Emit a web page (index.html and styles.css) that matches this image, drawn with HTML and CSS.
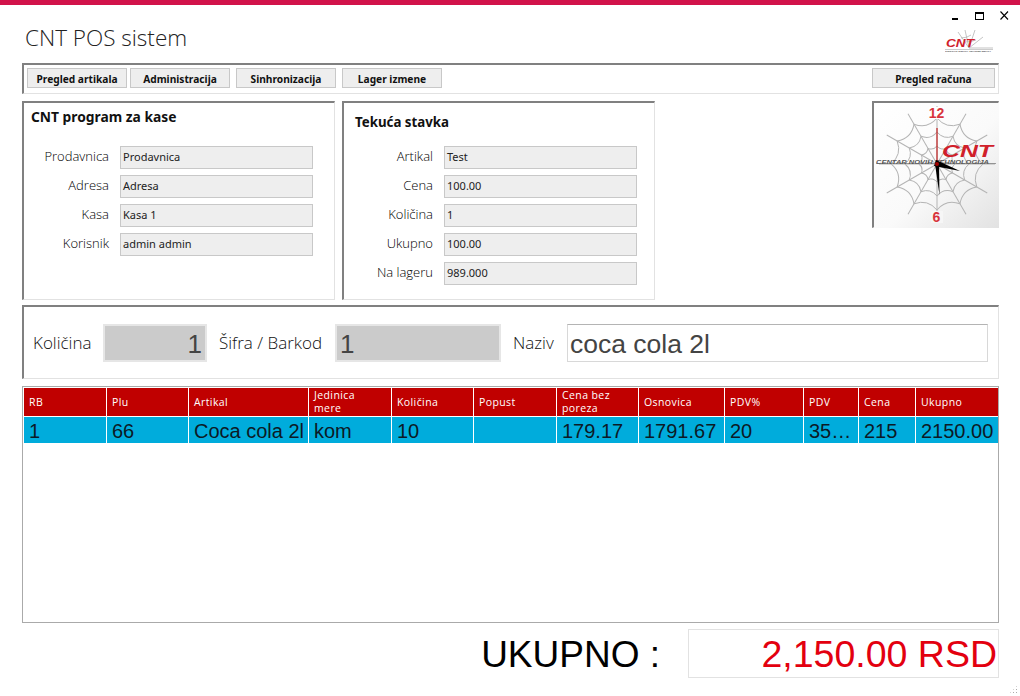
FILE: index.html
```html
<!DOCTYPE html>
<html>
<head>
<meta charset="UTF-8">
<title>CNT POS sistem</title>
<link rel="stylesheet" href="styles.css">
</head>
<body>
<div class="top-line"></div>
<div class="window">

  <div class="header">
    <h1 class="app-title">CNT POS sistem</h1>
    <div class="header-right">
      <svg class="win-controls" width="60" height="12" viewBox="0 0 60 12">
        <rect x="2" y="8" width="6" height="2" fill="#000"/>
        <rect x="25.5" y="2.5" width="8" height="7" fill="none" stroke="#000"/>
        <rect x="25" y="2" width="9" height="2" fill="#000"/>
        <path d="M50.5 1.5 L58 9.5 M58 1.5 L50.5 9.5" stroke="#000" stroke-width="1.1" fill="none"/>
      </svg>
      <svg class="small-logo" width="48" height="22" viewBox="0 0 48 22">
        <g stroke="#aaa" stroke-width="0.7" fill="none">
          <path d="M24 18 L13 2 M24 18 L20 0 M24 18 L30 0 M24 18 L38 7 M24 18 L48 18"/>
          <path d="M16 8 Q22 8 26 5 M20 12 Q26 12 31 10"/>
        </g>
        <text class="logo-cnt" x="1" y="17" font-size="11" textLength="28" lengthAdjust="spacingAndGlyphs">CNT</text>
        <line x1="0" y1="19.5" x2="48" y2="19.5" stroke="#999" stroke-width="0.5"/>
        <text class="logo-sub" x="0" y="21.6" font-size="2.4" textLength="46" lengthAdjust="spacingAndGlyphs">CENTAR NOVIH TEHNOLOGIJA</text>
      </svg>
    </div>
  </div>

  <div class="toolbar box">
    <div class="btn btn-first">Pregled artikala</div>
    <div class="btn">Administracija</div>
    <div class="btn">Sinhronizacija</div>
    <div class="btn">Lager izmene</div>
    <div class="btn btn-right">Pregled računa</div>
  </div>

  <div class="info-row">
    <div class="panel panel-shop box">
      <h2 class="panel-title">CNT program za kase</h2>
      <div class="fields">
        <div class="field-label">Prodavnica</div><div class="field">Prodavnica</div>
        <div class="field-label">Adresa</div><div class="field">Adresa</div>
        <div class="field-label">Kasa</div><div class="field">Kasa 1</div>
        <div class="field-label">Korisnik</div><div class="field">admin admin</div>
      </div>
    </div>

    <div class="panel panel-item box">
      <h2 class="panel-title">Tekuća stavka</h2>
      <div class="fields">
        <div class="field-label">Artikal</div><div class="field">Test</div>
        <div class="field-label">Cena</div><div class="field">100.00</div>
        <div class="field-label">Količina</div><div class="field">1</div>
        <div class="field-label">Ukupno</div><div class="field">100.00</div>
        <div class="field-label">Na lageru</div><div class="field">989.000</div>
      </div>
    </div>

    <div class="clock box">
      <svg width="125" height="125" viewBox="0 0 125 125">
        <defs>
          <linearGradient id="clockBg" x1="0" y1="0" x2="1" y2="1">
            <stop offset="0" stop-color="#ffffff"/>
            <stop offset="0.55" stop-color="#fafafa"/>
            <stop offset="1" stop-color="#e2e2e2"/>
          </linearGradient>
          <g id="webPart" fill="none" stroke="#b4b4b4" stroke-width="1">
            <path d="M0 0 L58 0"/>
            <path d="M46 0 Q34.8 9.3 39.8 23"/>
            <path d="M32 0 Q24.1 6.5 27.7 16"/>
            <path d="M18 0 Q13.5 3.6 15.6 9"/>
          </g>
        </defs>
        <rect width="125" height="125" fill="url(#clockBg)"/>
        <g transform="translate(63 61)">
          <use href="#webPart"/>
          <use href="#webPart" transform="rotate(30)"/>
          <use href="#webPart" transform="rotate(60)"/>
          <use href="#webPart" transform="rotate(90)"/>
          <use href="#webPart" transform="rotate(120)"/>
          <use href="#webPart" transform="rotate(150)"/>
          <use href="#webPart" transform="rotate(180)"/>
          <use href="#webPart" transform="rotate(210)"/>
          <use href="#webPart" transform="rotate(240)"/>
          <use href="#webPart" transform="rotate(270)"/>
          <use href="#webPart" transform="rotate(300)"/>
          <use href="#webPart" transform="rotate(330)"/>
        </g>
        <rect x="55" y="4" width="15" height="12" fill="#fff"/>
        <rect x="57" y="108" width="12" height="12" fill="#f6f6f6"/>
        <text class="clock-num" x="62.5" y="15" font-size="14" text-anchor="middle">12</text>
        <text class="clock-num" x="62.5" y="119" font-size="14" text-anchor="middle">6</text>
        <text class="logo-cnt" x="68" y="54" font-size="16" textLength="51" lengthAdjust="spacingAndGlyphs">CNT</text>
        <line x1="2" y1="60.5" x2="122" y2="60.5" stroke="#777" stroke-width="0.7"/>
        <text class="logo-sub" x="2" y="60.5" font-size="6" textLength="113" lengthAdjust="spacingAndGlyphs">CENTAR NOVIH TEHNOLOGIJA</text>
        <line x1="63" y1="25" x2="63" y2="61" stroke="#c00000" stroke-width="1"/>
        <path d="M62 57 L86 68 L60 63 Z" fill="#000"/>
        <path d="M61 61 L65 61 L65.5 92 Z" fill="#000"/>
        <circle cx="63" cy="61" r="2" fill="#a00000"/>
      </svg>
    </div>
  </div>

  <div class="search box">
    <div class="search-label label-qty">Količina</div>
    <div class="search-input input-qty">1</div>
    <div class="search-label label-code">Šifra / Barkod</div>
    <div class="search-input input-code">1</div>
    <div class="search-label label-name">Naziv</div>
    <div class="input-name">coca cola 2l</div>
  </div>

  <div class="table-wrap">
    <table class="items">
      <thead>
        <tr>
          <th>RB</th>
          <th>Plu</th>
          <th>Artikal</th>
          <th>Jedinica mere</th>
          <th>Količina</th>
          <th>Popust</th>
          <th>Cena bez poreza</th>
          <th>Osnovica</th>
          <th>PDV%</th>
          <th>PDV</th>
          <th>Cena</th>
          <th>Ukupno</th>
        </tr>
      </thead>
      <tbody>
        <tr>
          <td>1</td>
          <td>66</td>
          <td>Coca cola 2l</td>
          <td>kom</td>
          <td>10</td>
          <td></td>
          <td>179.17</td>
          <td>1791.67</td>
          <td>20</td>
          <td>35…</td>
          <td>215</td>
          <td>2150.00</td>
        </tr>
      </tbody>
    </table>
  </div>

  <div class="total-row">
    <div class="total-label">UKUPNO :</div>
    <div class="total-value">2,150.00 RSD</div>
  </div>

</div>
<div class="grip"></div>
</body>
</html>
```

FILE: styles.css
```css
* {
  box-sizing: border-box;
}

body {
  margin: 0;
  background-color: #fff;
  font-family: "Open Sans", sans-serif;
  color: #000;
  height: 696px;
  overflow: hidden;
}

.top-line {
  height: 5px;
  background-color: #d1134a;
}

.window {
  padding: 0 21px 0 22px;
}

/* gray top and left edge, pale right and bottom edge */
.box {
  border-top: 2px solid #808080;
  border-left: 2px solid #808080;
  border-right: 1px solid #e2e2e2;
  border-bottom: 1px solid #e2e2e2;
}

.header {
  height: 58px;
  display: flex;
  justify-content: space-between;
  margin-right: -11px;
}

.app-title {
  margin: 19px 0 0 3px;
  font-size: 22.5px;
  line-height: 28px;
  font-weight: 300;
  color: #222;
}

.header-right {
  display: flex;
  flex-direction: column;
  align-items: flex-end;
  padding-top: 5px;
}

.win-controls {
  display: block;
}

.small-logo {
  display: block;
  margin: 8px 17px 0 0;
}

.logo-cnt {
  font-family: "Liberation Sans", sans-serif;
  font-weight: bold;
  font-style: italic;
  fill: #d0202a;
}

.logo-sub {
  font-family: "Liberation Sans", sans-serif;
  font-weight: bold;
  font-style: italic;
  fill: #555;
}

.clock-num {
  font-family: "Liberation Sans", sans-serif;
  font-weight: bold;
  fill: #d8343c;
}

.toolbar {
  height: 31px;
  display: flex;
  gap: 6px;
  padding: 3px 3px 0 3px;
}

.btn {
  width: 100px;
  height: 20px;
  background-color: #eee;
  border: 1px solid #c8c8c8;
  font-family: "Noto Sans", sans-serif;
  font-size: 10.2px;
  font-weight: bold;
  line-height: 20px;
  text-align: center;
  color: #111;
}

.btn-first {
  margin-right: -3px;
}

.btn-right {
  width: 123px;
  margin-left: auto;
}

.info-row {
  display: flex;
  margin-top: 7px;
  height: 199px;
}

.panel {
  width: 313px;
  margin-right: 7px;
}

.panel-shop {
  padding: 4px 0 0 7px;
}

.panel-item {
  padding: 9px 0 0 11px;
}

.panel-title {
  margin: 0 0 19px 0;
  font-family: "Noto Sans", sans-serif;
  font-size: 13.8px;
  line-height: 20px;
  font-weight: bold;
  color: #111;
}

.panel-item .panel-title {
  margin-bottom: 14px;
  font-size: 13.3px;
}

.fields {
  display: grid;
  grid-template-columns: 78px 193px;
  grid-auto-rows: 23px;
  column-gap: 11px;
  row-gap: 6px;
}

.field-label {
  text-align: right;
  font-size: 13px;
  font-weight: 300;
  line-height: 21px;
  color: #000;
}

.field {
  background-color: #eee;
  border: 1px solid #c8c8c8;
  padding-left: 2px;
  font-family: "Noto Sans", sans-serif;
  font-size: 11px;
  line-height: 19px;
  color: #222;
}

.clock {
  width: 127px;
  height: 127px;
  margin-left: auto;
}

.clock svg {
  display: block;
}

.search {
  height: 74px;
  margin-top: 5px;
  display: flex;
  align-items: flex-start;
  padding-top: 17px;
}

.search-label {
  font-size: 17px;
  font-weight: 300;
  line-height: 38px;
  color: #111;
}

.label-qty {
  width: 70px;
  margin-left: 9px;
}

.label-code {
  width: 116px;
  margin-left: 12px;
}

.label-name {
  width: 54px;
  margin-left: 12px;
}

.search-input {
  height: 38px;
  background-color: #cbcbcb;
  border: 2px solid #e6e6e6;
  padding: 0 3px;
  font-family: "Liberation Sans", sans-serif;
  font-size: 26px;
  line-height: 36px;
  color: #444;
}

.input-qty {
  width: 104px;
  text-align: right;
}

.input-code {
  width: 166px;
}

.input-name {
  width: 421px;
  height: 38px;
  background-color: #fff;
  border: 1px solid #d8d8d8;
  border-top-color: #b4b4b4;
  padding-left: 2px;
  font-family: "Liberation Sans", sans-serif;
  font-size: 26.5px;
  line-height: 38px;
  color: #444;
}

.table-wrap {
  height: 237px;
  margin-top: 7px;
  border: 1px solid #aaa;
}

.items {
  table-layout: fixed;
  width: 976px;
  border-collapse: separate;
  border-spacing: 1px;
}

.items th {
  height: 28px;
  padding: 0 16px 0 5px;
  background-color: #c00000;
  font-size: 10.5px;
  font-weight: 400;
  line-height: 13px;
  letter-spacing: 0.4px;
  text-align: left;
  color: #fff;
}

.items td {
  height: 26px;
  padding: 2px 0 0 5px;
  background-color: #00acdc;
  font-family: "Liberation Sans", sans-serif;
  font-size: 20px;
  white-space: nowrap;
  color: #0c1a26;
}

.items th:nth-child(1) { width: 82px; }
.items th:nth-child(2) { width: 81px; }
.items th:nth-child(3) { width: 119px; }
.items th:nth-child(4) { width: 82px; }
.items th:nth-child(5) { width: 81px; }
.items th:nth-child(6) { width: 82px; }
.items th:nth-child(7) { width: 81px; }
.items th:nth-child(8) { width: 85px; }
.items th:nth-child(9) { width: 78px; }
.items th:nth-child(10) { width: 54px; }
.items th:nth-child(11) { width: 56px; }
.items th:nth-child(12) { width: 82px; }

.total-row {
  display: flex;
  justify-content: flex-end;
  margin-top: 6px;
}

.total-label {
  font-family: "Liberation Sans", sans-serif;
  font-size: 37px;
  line-height: 51px;
  margin-right: 28px;
}

.total-value {
  width: 311px;
  height: 49px;
  border: 1px solid #e2e2e2;
  padding-right: 1px;
  font-family: "Liberation Sans", sans-serif;
  font-size: 37.5px;
  line-height: 49px;
  text-align: right;
  color: #e3000f;
}

/* resize handle in the window corner */
.grip {
  position: absolute;
  right: 2px;
  bottom: 2px;
  width: 9px;
  height: 9px;
  background-image: radial-gradient(circle, #aaa 1px, transparent 1px);
  background-size: 3px 3px;
  clip-path: polygon(100% 0, 100% 100%, 0 100%);
}
```
